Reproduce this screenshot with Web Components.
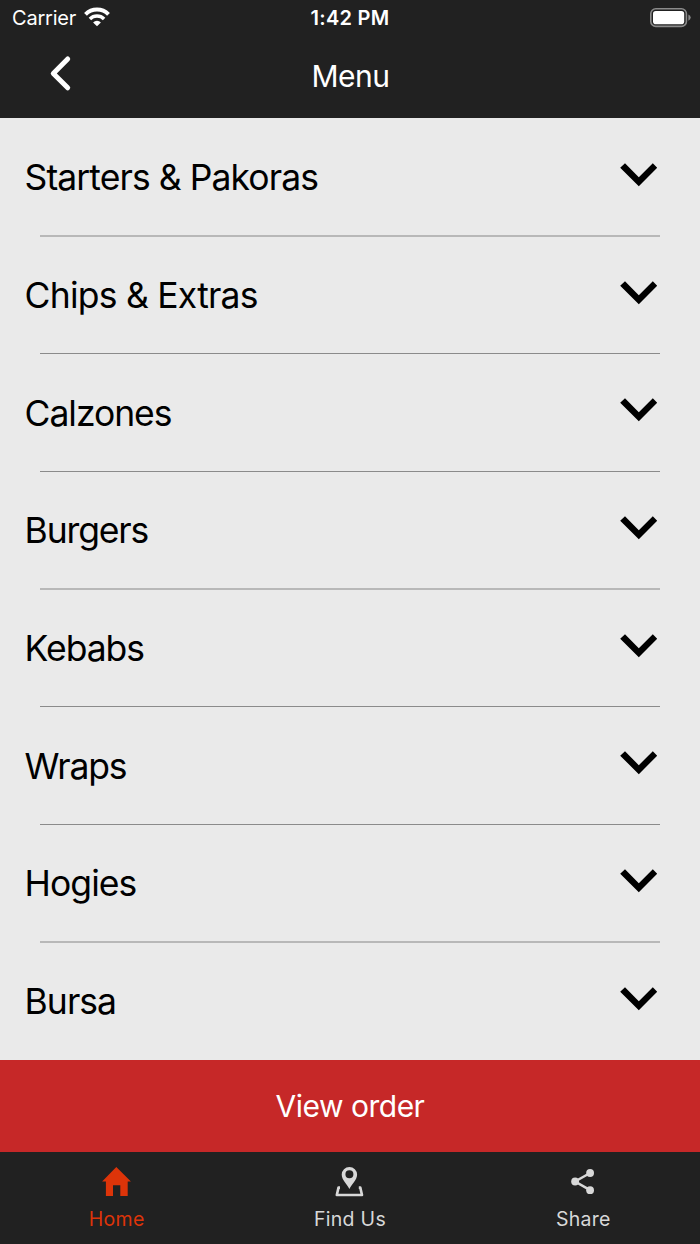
<!DOCTYPE html>
<html lang="en">
<head>
<meta charset="utf-8">
<title>Menu</title>
<style>
  html, body { margin: 0; height: 100%; }
  body { font-family: Inter, "Liberation Sans", sans-serif; overflow: hidden; background: #eaeaea; }
</style>
</head>
<body>
<menu-app></menu-app>
<script>
const define = (name, html) => customElements.define(name, class extends HTMLElement {
  constructor() {
    super();
    const t = document.createElement('template');
    t.innerHTML = html;
    this.attachShadow({ mode: 'open' }).append(t.content.cloneNode(true));
  }
  connectedCallback() {
    const tracking = this.getAttribute('tracking');
    if (tracking) this.style.setProperty('--tracking', tracking + 'px');
  }
});

define('status-bar', `
  <style>
    :host { display: grid; grid-template-columns: 1fr auto 1fr; height: 36px; align-items: center; font-size: 20px; line-height: 36px; color: #fff; }
    .left { display: flex; align-items: center; gap: 8px; padding-left: 12px; letter-spacing: -.2px; }
    .time { font-weight: 600; letter-spacing: .25px; }
    .right { display: flex; justify-content: flex-end; padding-right: 8px; }
    svg { display: block; }
    .wifi { margin-top: -2px; }
    .right svg { margin-top: -1px; }
  </style>
  <div class="left"><span>Carrier</span>
    <svg class="wifi" width="26" height="20" viewBox="0 0 26 20" fill="none" stroke="#fff">
      <path d="M1.500 7.300a16.300 16.300 0 0 1 23 0" stroke-width="4"/>
      <path d="M5.900 11.900a10.100 10.100 0 0 1 14.200 0" stroke-width="3.500"/>
      <path d="M13 19.300l-3.900-3.900a5.500 5.500 0 0 1 7.800 0z" fill="#fff" stroke="none"/>
    </svg>
  </div>
  <span class="time">1:42 PM</span>
  <div class="right">
    <svg width="42" height="20" viewBox="0 0 42 20">
      <rect x=".8" y=".8" width="35.6" height="17.6" rx="5" fill="none" stroke="#8b8b8b" stroke-width="1.6"/>
      <rect x="3" y="3" width="31.2" height="13.2" rx="2.8" fill="#fff"/>
      <path d="M38.4 6.5q2.3 1 2.3 3.1t-2.3 3.1z" fill="#8b8b8b"/>
    </svg>
  </div>`);

define('nav-bar', `
  <style>
    :host { display: grid; grid-template-columns: 120px 1fr 120px; height: 82px; align-items: center; color: #fff; }
    svg { display: block; margin: -8px 0 0 48px; }
    h1 { margin: -2px 0 0; padding-left: 1px; font-size: 30px; font-weight: 400; line-height: 40px; letter-spacing: -.5px; text-align: center; }
  </style>
  <svg width="26" height="38" viewBox="0 0 26 38" fill="none" stroke="#fff" stroke-width="5" stroke-linecap="round" stroke-linejoin="round"><path d="M19.700 5L5.300 19.400l14.400 14.400"/></svg>
  <h1><slot></slot></h1>`);

define('menu-row', `
  <style>
    :host { display: grid; grid-template-columns: 1fr auto; align-content: start; height: 117.7px; box-sizing: border-box; color: #000; }
    .label { padding: 1.2px 0 0 24.6px; height: 116.8px; font-size: 35.5px; line-height: 118px; letter-spacing: var(--tracking); white-space: nowrap; }
    svg { display: block; margin: 45px 42px 0 0; }
    .line { grid-column: 1 / 3; height: 2px; margin: -1px 40px -1px; background: #b8b8b8; }
    :host([line="crisp"]) .line { height: 1px; margin-top: -.7px; background: #8b8b8b; }
    :host([line="none"]) .line { display: none; }
  </style>
  <span class="label"><slot></slot></span>
  <svg width="38" height="26" viewBox="0 0 38 26"><path d="M.2 4.5L5 0l13.8 14L32.8 0 37.2 4.5 18.8 23z" transform="translate(0 .2)"/></svg>
  <div class="line"></div>`);

define('order-button', `
  <style>
    :host { display: block; height: 92px; background: #c62828; }
    button { all: unset; display: block; width: 100%; text-align: center; font-size: 30px; line-height: 92px; letter-spacing: -.5px; color: #fff; }
  </style>
  <button><slot></slot></button>`);

define('tab-item', `
  <style>
    :host { display: flex; flex-direction: column; align-items: center; color: #d8d8d8; font-size: 19.5px; letter-spacing: .3px; }
    :host([active]) { color: #dd3409; }
    .label { line-height: 24px; margin-top: 8px; }
    .icon { height: 35px; }
  </style>
  <div class="icon"><slot name="icon"></slot></div>
  <span class="label"><slot></slot></span>`);

define('tab-bar', `
  <style>
    :host { display: grid; grid-template-columns: repeat(3, 1fr); height: 80px; padding-top: 12px; background: #212121; }
    svg { display: block; }
  </style>
  <tab-item active>
    <svg slot="icon" width="30" height="34" viewBox="0.700 0 30 34" fill="#dd3409"><path d="M15 3L29.600 17.500h-3.200V32H19V21.300h-7.300V32H4.600V17.500H.8z"/></svg>Home
  </tab-item>
  <tab-item>
    <svg slot="icon" width="30" height="34" viewBox="0.600 0 30 34" fill="#d8d8d8">
      <path fill-rule="evenodd" d="M15 25C12.800 20.600 7.300 16 7.300 10.600a7.700 7.700 0 0 1 15.400 0C22.700 16 17.200 20.600 15 25zM15 6.300a4 4 0 1 0 0 8 4 4 0 0 0 0-8z"/>
      <path d="M5.600 23.600H4.100L2.400 31h25.200l-1.700-7.400H24.400" fill="none" stroke="#d8d8d8" stroke-width="2.600" stroke-linejoin="round"/>
    </svg>Find Us
  </tab-item>
  <tab-item>
    <svg slot="icon" width="30" height="34" viewBox="0.400 0 30 34" fill="#d8d8d8">
      <path d="M22.500 9L7.500 17.500l15 8.700" fill="none" stroke="#d8d8d8" stroke-width="2.500"/>
      <circle cx="22.500" cy="9" r="3.900"/><circle cx="7.500" cy="17.500" r="3.900"/><circle cx="22.500" cy="26.200" r="3.900"/>
    </svg>Share
  </tab-item>`);

define('menu-app', `
  <style>
    :host { display: flex; flex-direction: column; width: 700px; height: 1244px; background: #eaeaea; }
    header { background: #212121; height: 118px; flex: none; }
    main { flex: 1; min-height: 0; overflow: hidden; }
  </style>
  <header><status-bar></status-bar><nav-bar>Menu</nav-bar></header>
  <main>
    <menu-row tracking="-.92">Starters &amp; Pakoras</menu-row>
    <menu-row tracking="-.77" line="crisp">Chips &amp; Extras</menu-row>
    <menu-row tracking="-1.05" line="crisp">Calzones</menu-row>
    <menu-row tracking="-1.15">Burgers</menu-row>
    <menu-row tracking="-1.05" line="crisp">Kebabs</menu-row>
    <menu-row tracking="-1.15" line="crisp">Wraps</menu-row>
    <menu-row tracking="-.95">Hogies</menu-row>
    <menu-row tracking="-.95" line="none">Bursa</menu-row>
  </main>
  <order-button>View order</order-button>
  <tab-bar></tab-bar>`);
</script>
</body>
</html>
